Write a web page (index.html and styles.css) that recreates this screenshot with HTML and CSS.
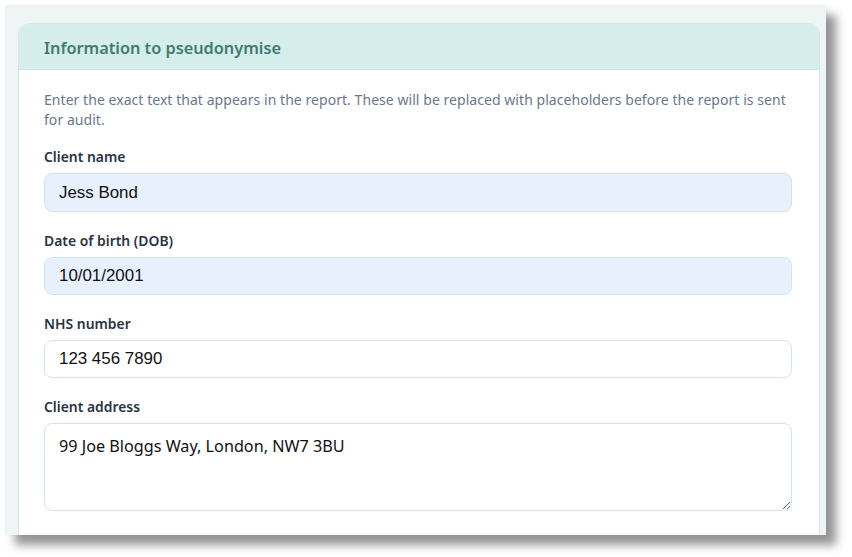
FILE: index.html
```html
<!DOCTYPE html>
<html lang="en">
<head>
<meta charset="utf-8">
<title>Information to pseudonymise</title>
<link rel="stylesheet" href="styles.css">
</head>
<body>
<div class="window">
  <section class="card">
    <header class="card-header">Information to pseudonymise</header>
    <form class="card-body">
      <p class="hint">Enter the exact text that appears in the report. These will be replaced with placeholders before the report is sent for audit.</p>
      <div class="field">
        <label class="label" for="name">Client name</label>
        <input class="input autofill tall" id="name" type="text" value="Jess Bond">
      </div>
      <div class="field">
        <label class="label" for="dob">Date of birth (DOB)</label>
        <input class="input autofill" id="dob" type="text" value="10/01/2001">
      </div>
      <div class="field">
        <label class="label" for="nhs">NHS number</label>
        <input class="input" id="nhs" type="text" value="123 456 7890">
      </div>
      <div class="field">
        <label class="label" for="addr">Client address</label>
        <textarea class="textarea" id="addr">99 Joe Bloggs Way, London, NW7 3BU</textarea>
      </div>
    </form>
  </section>
</div>
</body>
</html>
```
FILE: styles.css
```css
html, body {
  margin: 0;
  padding: 0;
}
body {
  width: 852px;
  height: 557px;
  overflow: hidden;
  background: #ffffff;
  font-family: "Noto Sans", "Open Sans", sans-serif;
}
.window {
  margin: 5px 0 0 5px;
  width: 821px;
  height: 530px;
  box-sizing: border-box;
  padding: 18px 6px 0 13px;
  background: #eff5f4;
  overflow: hidden;
  box-shadow: 10px 10px 9px rgba(0, 0, 0, 0.42), 0 0 4px rgba(0, 0, 0, 0.04);
}
.card {
  height: 100%;
  box-sizing: border-box;
  background: #ffffff;
  border: 1px solid #d5e8e4;
  border-bottom: none;
  border-radius: 12px 12px 0 0;
  overflow: hidden;
}
.card-header {
  height: 46px;
  box-sizing: border-box;
  padding: 3px 25px 0;
  display: flex;
  align-items: center;
  background: #d5eeeb;
  border-bottom: 1px solid #cfe7e3;
  color: #3f7b6f;
  font-size: 16.3px;
  font-weight: 600;
}
.card-body {
  padding: 20px 27px 0 25px;
}
.hint {
  margin: 0 0 18px;
  font-size: 14px;
  letter-spacing: 0.05px;
  line-height: 20px;
  color: #6b778a;
}
.field {
  margin-bottom: 20px;
}
.label {
  display: block;
  margin-bottom: 7px;
  font-size: 13.9px;
  font-weight: 600;
  line-height: 18px;
  color: #2b3340;
}
.input {
  display: block;
  width: 100%;
  height: 38px;
  box-sizing: border-box;
  margin: 0;
  padding: 0 14px;
  border: 1px solid #d4e6e2;
  border-radius: 8px;
  background: #ffffff;
  color: #111111;
  font-family: "Liberation Sans", Arial, sans-serif;
  font-size: 16.9px;
  outline: none;
}
.input.tall {
  height: 39px;
}
.input.autofill {
  background: #e8f0fe;
}
.textarea {
  display: block;
  width: 100%;
  height: 88px;
  box-sizing: border-box;
  margin: 0;
  padding: 11px 14px;
  border: 1px solid #d4e6e2;
  border-radius: 8px;
  background: #ffffff;
  color: #111111;
  font-family: "Noto Sans", "Open Sans", sans-serif;
  font-size: 16.2px;
  line-height: 22px;
  resize: vertical;
  outline: none;
}
```
